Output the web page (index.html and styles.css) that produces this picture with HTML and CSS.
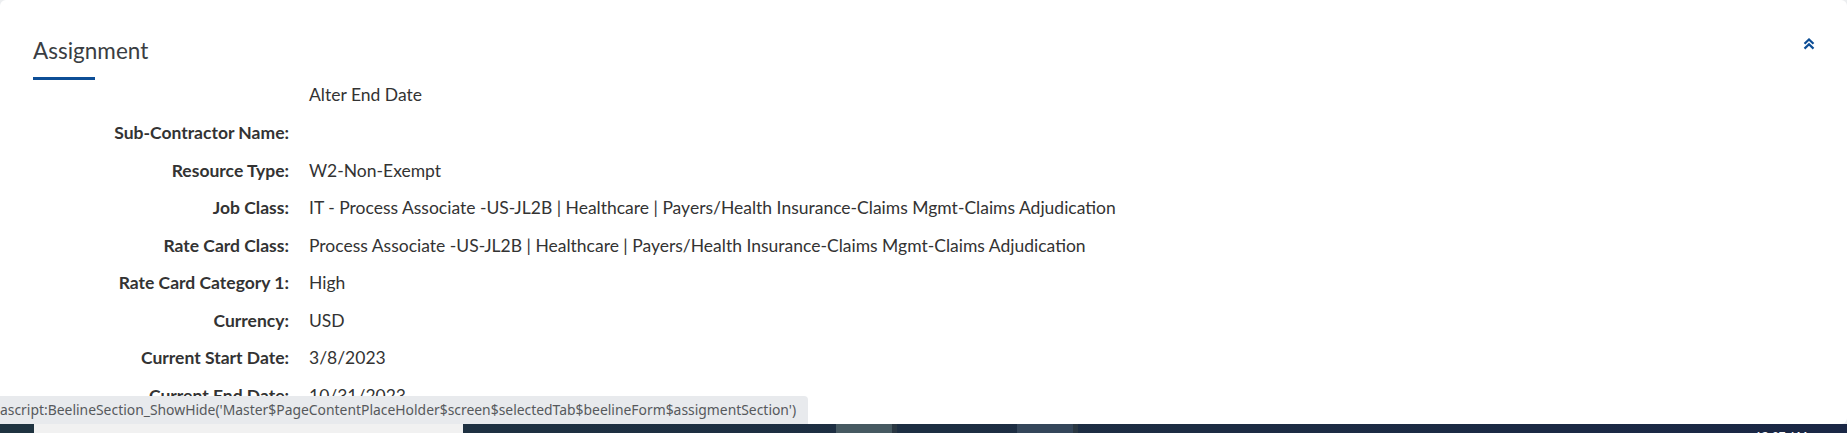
FILE: index.html
```html
<!DOCTYPE html>
<html lang="en">
<head>
<meta charset="utf-8">
<title>Assignment</title>
<link rel="stylesheet" href="styles.css">
</head>
<body>
<div class="page">
  <div class="card">
    <div class="section-head">
      <h2 class="section-title">Assignment</h2>
      <a class="collapse-toggle" href="#" aria-label="Collapse">
        <svg width="12" height="12" viewBox="0 0 12 12"><polyline points="1.5,5.8 6,1.5 10.5,5.8" fill="none" stroke="#0d4e96" stroke-width="2.2"/><polyline points="1.5,10.6 6,6.3 10.5,10.6" fill="none" stroke="#0d4e96" stroke-width="2.2"/></svg>
      </a>
    </div>
    <div class="fields">
      <div class="field field-first"><span class="label"></span><span class="value">Alter End Date</span></div>
      <div class="field"><span class="label">Sub-Contractor Name:</span><span class="value"></span></div>
      <div class="field"><span class="label">Resource Type:</span><span class="value">W2-Non-Exempt</span></div>
      <div class="field"><span class="label">Job Class:</span><span class="value">IT - Process Associate -US-JL2B | Healthcare | Payers/Health Insurance-Claims Mgmt-Claims Adjudication</span></div>
      <div class="field"><span class="label">Rate Card Class:</span><span class="value">Process Associate -US-JL2B | Healthcare | Payers/Health Insurance-Claims Mgmt-Claims Adjudication</span></div>
      <div class="field"><span class="label">Rate Card Category 1:</span><span class="value">High</span></div>
      <div class="field"><span class="label">Currency:</span><span class="value">USD</span></div>
      <div class="field"><span class="label">Current Start Date:</span><span class="value">3/8/2023</span></div>
      <div class="field"><span class="label">Current End Date:</span><span class="value">10/31/2023</span></div>
    </div>
  </div>
  <div class="status-bubble">ascript:BeelineSection_ShowHide('Master$PageContentPlaceHolder$screen$selectedTab$beelineForm$assigmentSection')</div>
</div>
<div class="taskbar">
  <div class="tb-start"></div>
  <div class="tb-search"></div>
  <div class="tb-gap1"></div>
  <div class="tb-app tb-app-active"></div>
  <div class="tb-sep"></div>
  <div class="tb-gap2"></div>
  <div class="tb-app tb-app-2"></div>
  <div class="tb-sep"></div>
  <div class="tb-fill"></div>
  <div class="tb-clock">12:07 AM</div>
</div>
</body>
</html>
```
FILE: styles.css
```css
html, body {
  margin: 0;
  padding: 0;
}
body {
  height: 433px;
  overflow: hidden;
  display: flex;
  flex-direction: column;
  background: #eceef0;
  font-family: Lato, "Liberation Sans", sans-serif;
  color: #333;
}
.page {
  position: relative;
  flex: 1;
  overflow: hidden;
}
.card {
  background: #fff;
  border-radius: 6px;
  padding: 36px 33px 0 33px;
  height: 100%;
  box-sizing: border-box;
}
.section-head {
  display: flex;
  justify-content: space-between;
  align-items: flex-start;
}
.section-title {
  margin: 0;
  font-size: 22.5px;
  line-height: 30px;
  font-weight: 400;
  color: #3a3d42;
}
.section-title::after {
  content: "";
  display: block;
  width: 62px;
  height: 3px;
  margin-top: 11px;
  background: #0d4e96;
}
.collapse-toggle {
  display: block;
  width: 12px;
  height: 12px;
  margin-top: 2px;
  margin-right: -1px;
}
.collapse-toggle svg {
  display: block;
}
.fields {
  display: flex;
  flex-direction: column;
}
.field {
  display: flex;
  padding: 5px 0;
  line-height: 27.5px;
  font-size: 17.5px;
}
.field-first {
  padding: 0 0 4px;
  line-height: 30px;
}
.label {
  width: 256px;
  flex: none;
  text-align: right;
  font-weight: 700;
  color: #333;
}
.value {
  margin-left: 20px;
  color: #333;
}
.status-bubble {
  position: absolute;
  left: 0;
  bottom: 0;
  width: 808px;
  height: 28px;
  box-sizing: border-box;
  background: #e8eaed;
  border-top-right-radius: 4px;
  color: #56595c;
  font-family: "Noto Sans", "Open Sans", sans-serif;
  font-size: 13.9px;
  line-height: 28px;
  white-space: nowrap;
  overflow: hidden;
}
.taskbar {
  height: 9px;
  flex: none;
  display: flex;
  background: linear-gradient(90deg, #1f3340 0%, #1d2e42 50%, #1a2745 100%);
  overflow: hidden;
}
.tb-start { width: 34px; }
.tb-search { width: 429px; background: #f1f1f1; }
.tb-gap1 { width: 373px; }
.tb-app { width: 56px; }
.tb-app-active { background: #465961; }
.tb-app-2 { background: #34465a; }
.tb-sep { width: 5px; background: #2a3742; }
.tb-gap2 { width: 120px; }
.tb-fill { flex: 1; }
.tb-clock {
  width: 92px;
  color: #fff;
  font-family: "Noto Sans", sans-serif;
  font-size: 12px;
  line-height: 12px;
  padding-top: 7px;
}
```
